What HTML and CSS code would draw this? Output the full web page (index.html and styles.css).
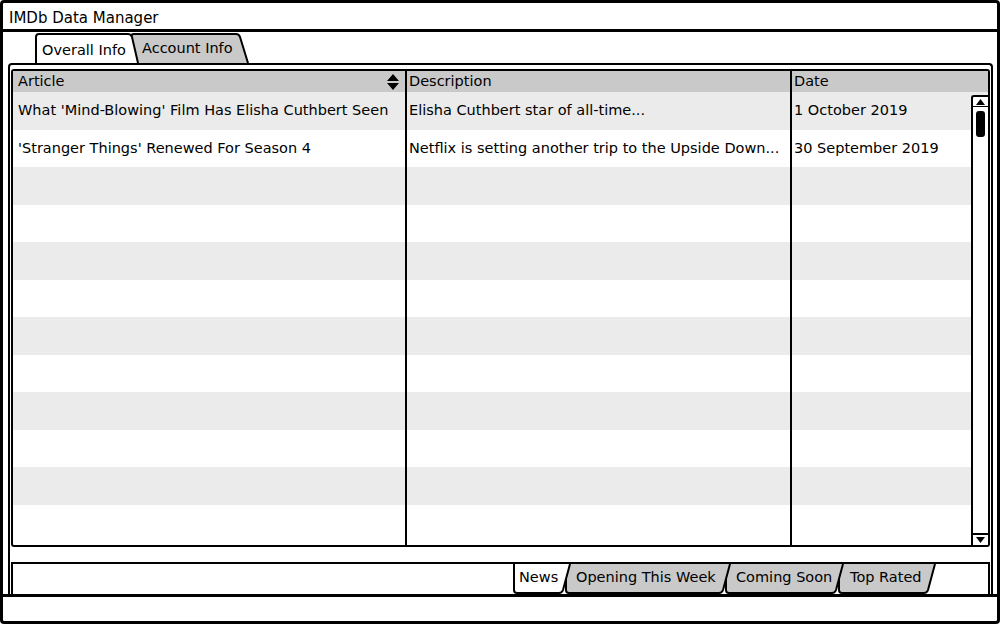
FILE: index.html
```html
<!DOCTYPE html>
<html>
<head>
<meta charset="utf-8">
<title>IMDb Data Manager</title>
<link rel="stylesheet" href="styles.css">
</head>
<body>
<div class="window">
  <div class="titlebar">IMDb Data Manager</div>
  <div class="tabrow">
    <div class="tab tab-overall">
      <svg class="tab-shape" width="104" height="30" viewBox="0 0 104 30"><path class="active" d="M1 30 V4 Q1 1 4 1 H93 Q96 1 97 4 L103 30"/></svg>
      <span class="tab-label">Overall Info</span>
    </div>
    <div class="tab tab-account">
      <svg class="tab-shape" width="119" height="30" viewBox="0 0 119 30"><path d="M1 30 V4 Q1 1 4 1 H106 Q109 1 110 4 L118 30"/></svg>
      <span class="tab-label">Account Info</span>
    </div>
  </div>
  <div class="panel">
    <div class="grid">
      <div class="row head">
        <div class="cell c1"><span>Article</span>
          <svg class="sort" width="12" height="16" viewBox="0 0 12 16"><path d="M0 7 L6 0 L12 7Z M0 9 L12 9 L6 16Z"/></svg>
        </div>
        <div class="cell c2">Description</div>
        <div class="cell c3">Date</div>
      </div>
      <div class="grid-body">
        <div class="row odd">
          <div class="cell c1">What 'Mind-Blowing' Film Has Elisha Cuthbert Seen</div>
          <div class="cell c2">Elisha Cuthbert star of all-time...</div>
          <div class="cell c3">1 October 2019</div>
        </div>
        <div class="row">
          <div class="cell c1">'Stranger Things' Renewed For Season 4</div>
          <div class="cell c2">Netflix is setting another trip to the Upside Down...</div>
          <div class="cell c3">30 September 2019</div>
        </div>
        <div class="row odd"><div class="cell c1"></div><div class="cell c2"></div><div class="cell c3"></div></div>
        <div class="row"><div class="cell c1"></div><div class="cell c2"></div><div class="cell c3"></div></div>
        <div class="row odd"><div class="cell c1"></div><div class="cell c2"></div><div class="cell c3"></div></div>
        <div class="row"><div class="cell c1"></div><div class="cell c2"></div><div class="cell c3"></div></div>
        <div class="row odd"><div class="cell c1"></div><div class="cell c2"></div><div class="cell c3"></div></div>
        <div class="row"><div class="cell c1"></div><div class="cell c2"></div><div class="cell c3"></div></div>
        <div class="row odd"><div class="cell c1"></div><div class="cell c2"></div><div class="cell c3"></div></div>
        <div class="row"><div class="cell c1"></div><div class="cell c2"></div><div class="cell c3"></div></div>
        <div class="row odd"><div class="cell c1"></div><div class="cell c2"></div><div class="cell c3"></div></div>
        <div class="row last"><div class="cell c1"></div><div class="cell c2"></div><div class="cell c3"></div></div>
        <div class="scrollbar">
          <div class="sb-btn sb-up"><svg width="9" height="6" viewBox="0 0 9 6"><path d="M0 6 L4.5 0 L9 6Z"/></svg></div>
          <div class="sb-track"><div class="sb-thumb"></div></div>
          <div class="sb-btn sb-down"><svg width="9" height="6" viewBox="0 0 9 6"><path d="M0 0 L9 0 L4.5 6Z"/></svg></div>
        </div>
      </div>
    </div>
    <div class="subcontent"></div>
    <div class="btabstrip">
      <div class="btab btab-news">
        <svg class="tab-shape" width="58" height="30" viewBox="0 0 58 30"><path class="active" d="M1 0 V26 Q1 29 4 29 H46 Q49 29 50 26 L57 0"/></svg>
        <span class="tab-label">News</span>
      </div>
      <div class="btab btab-opening">
        <svg class="tab-shape" width="166" height="30" viewBox="0 0 166 30"><path d="M1 0 V26 Q1 29 4 29 H154 Q157 29 158 26 L165 0"/></svg>
        <span class="tab-label">Opening This Week</span>
      </div>
      <div class="btab btab-coming">
        <svg class="tab-shape" width="119" height="30" viewBox="0 0 119 30"><path d="M1 0 V26 Q1 29 4 29 H107 Q110 29 111 26 L118 0"/></svg>
        <span class="tab-label">Coming Soon</span>
      </div>
      <div class="btab btab-top">
        <svg class="tab-shape" width="98" height="30" viewBox="0 0 98 30"><path d="M1 0 V26 Q1 29 4 29 H86 Q89 29 90 26 L97 0"/></svg>
        <span class="tab-label">Top Rated</span>
      </div>
    </div>
  </div>
  <div class="statusbar"></div>
</div>
</body>
</html>
```

FILE: styles.css
```css
* {
  box-sizing: border-box;
  margin: 0;
  padding: 0;
}

html, body {
  background: #fff;
}

body {
  margin: 0;
  font-family: "DejaVu Sans", "Liberation Sans", sans-serif;
  font-size: 14.5px;
  color: #000;
}

.window {
  width: 1000px;
  height: 624px;
  border: 3px solid #000;
  border-radius: 4px;
  display: flex;
  flex-direction: column;
  overflow: hidden;
}

.titlebar {
  flex: none;
  height: 29px;
  border-bottom: 3px solid #000;
  padding: 2px 0 0 6px;
  font-size: 15px;
  line-height: 26px;
  white-space: nowrap;
}

/* top tabs */
.tabrow {
  flex: none;
  height: 31px;
  display: flex;
  align-items: flex-end;
  padding-left: 32px;
}

.tab {
  position: relative;
  flex: none;
  height: 30px;
  line-height: 30px;
  white-space: nowrap;
}

.tab-shape {
  position: absolute;
  left: 0;
  top: 0;
  z-index: -1;
  display: block;
}

.tab-shape path {
  fill: #c9c9c9;
  stroke: #000;
  stroke-width: 2;
  stroke-linejoin: round;
}

.tab-shape path.active {
  fill: #fff;
}

.tab-overall {
  width: 104px;
  padding: 2px 0 0 7px;
  z-index: 3;
}

.tab-account {
  width: 119px;
  margin-left: -9px;
  padding-left: 12px;
  z-index: 2;
}

/* panel */
.panel {
  flex: 1;
  margin: 0 4px 0 5px;
  border: 2px solid #000;
  border-bottom: none;
  border-radius: 4px 4px 0 0;
  padding: 4px 1px 0 1px;
  display: flex;
  flex-direction: column;
}

.grid {
  flex: none;
  height: 478px;
  border: 2px solid #000;
  border-radius: 3px;
  display: flex;
  flex-direction: column;
  overflow: hidden;
}

.row {
  display: flex;
  flex: none;
  height: 37.5px;
  line-height: 37.5px;
  white-space: nowrap;
}

.row.head {
  height: 21px;
  line-height: 21px;
  background: #c9c9c9;
}

.row.odd {
  background: #ebebeb;
}

.row.last {
  flex: 1;
}

.cell {
  overflow: hidden;
}

.c1 {
  width: 394px;
  flex: none;
  border-right: 2px solid #000;
  padding-left: 5px;
}

.c2 {
  width: 385px;
  flex: none;
  border-right: 2px solid #000;
  padding-left: 2px;
}

.c3 {
  flex: 1;
  padding-left: 2px;
}

.head .c1 {
  display: flex;
  align-items: center;
  justify-content: space-between;
  padding-right: 6px;
}

.sort {
  display: block;
  flex: none;
}

.sort path {
  fill: #000;
}

.grid-body {
  flex: 1;
  display: flex;
  flex-direction: column;
  position: relative;
}

/* scrollbar overlay */
.scrollbar {
  position: absolute;
  top: 3px;
  right: 0;
  bottom: 0;
  width: 17px;
  background: #fff;
  border-left: 2px solid #000;
  border-top: 2px solid #000;
  border-radius: 3px 0 0 0;
  display: flex;
  flex-direction: column;
}

.sb-btn {
  flex: none;
  height: 10px;
  display: flex;
  align-items: center;
  justify-content: center;
}

.sb-btn path {
  fill: #000;
}

.sb-up {
  border-bottom: 1px solid #000;
}

.sb-down {
  height: 12px;
  border-top: 2px solid #000;
}

.sb-track {
  flex: 1;
  padding: 4px 3px 0 3px;
}

.sb-thumb {
  width: 9px;
  height: 26px;
  background: #000;
  border-radius: 3px;
}

.subcontent {
  flex: none;
  height: 15px;
}

/* bottom tabs */
.btabstrip {
  flex: none;
  height: 32px;
  border: 2px solid #000;
  border-bottom: none;
  display: flex;
  align-items: flex-start;
  padding-left: 500px;
}

.btab {
  position: relative;
  flex: none;
  height: 30px;
  line-height: 27px;
  white-space: nowrap;
}

.btab-news {
  width: 58px;
  padding-left: 6px;
  z-index: 4;
}

.btab-opening {
  width: 166px;
  margin-left: -6px;
  padding-left: 11px;
  z-index: 3;
}

.btab-coming {
  width: 119px;
  margin-left: -6px;
  padding-left: 11px;
  z-index: 2;
}

.btab-top {
  width: 98px;
  margin-left: -6px;
  padding-left: 12px;
  z-index: 1;
}

.statusbar {
  flex: none;
  height: 27px;
  border-top: 3px solid #000;
}
```
